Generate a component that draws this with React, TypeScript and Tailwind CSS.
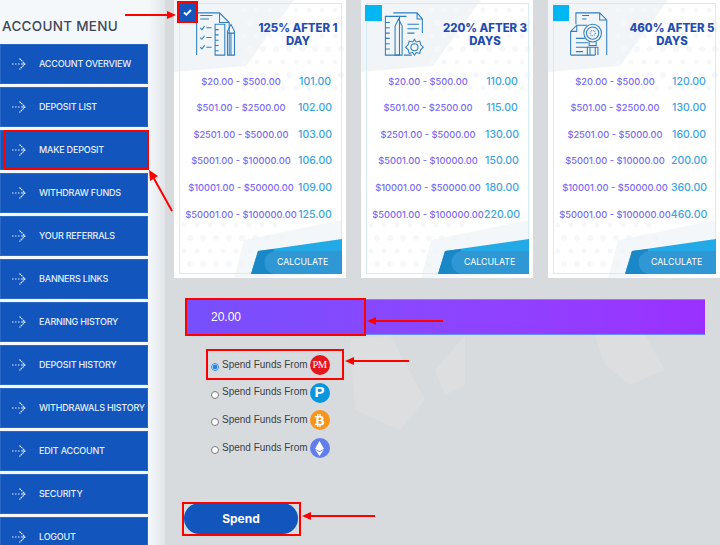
import React from "react";
import { FaBtc, FaEthereum } from "react-icons/fa";

const menu = ["ACCOUNT OVERVIEW","DEPOSIT LIST","MAKE DEPOSIT","WITHDRAW FUNDS","YOUR REFERRALS","BANNERS LINKS","EARNING HISTORY","DEPOSIT HISTORY","WITHDRAWALS HISTORY","EDIT ACCOUNT","SECURITY","LOGOUT"];
const ranges = ["$20.00 - $500.00","$501.00 - $2500.00","$2501.00 - $5000.00","$5001.00 - $10000.00","$10001.00 - $50000.00","$50001.00 - $100000.00"];
const plans = [
  { t1:"125% AFTER 1", t2:"DAY", vals:["101.00","102.00","103.00","106.00","109.00","125.00"], kind:0 },
  { t1:"220% AFTER 3", t2:"DAYS", vals:["110.00","115.00","130.00","150.00","180.00","220.00"], kind:1 },
  { t1:"460% AFTER 5", t2:"DAYS", vals:["120.00","130.00","160.00","200.00","360.00","460.00"], kind:2 },
];

function MenuArrow() {
  return (
    <svg width="14" height="12" viewBox="0 0 14 12" fill="none" stroke="#e3edfb" strokeWidth="1.1">
      <path d="M0 6h1.5M3 6h1.5M6 6h1.5M9 6h4" />
      <path d="M7.5 0.5L13 6l-5.5 5.5" strokeDasharray="1.8 0.6" />
    </svg>
  );
}

function DocIcon({ kind }: { kind: number }) {
  const c = "#2f7fbe";
  return (
    <svg width="44" height="44" viewBox="0 0 46 50" fill="none" stroke={c} strokeWidth="1.2">
      {kind === 0 && (
        <g>
          <path d="M1 49V1h26l11 11v37" />
          <path d="M27 1v11h11" />
          <path d="M5 4h14M5 8h10" />
          <path d="M5 18l2 2 3-4M12 18h6M5 29l2 2 3-4M12 29h6M5 40l2 2 3-4M12 40h6" />
          <path d="M22 49V14h11v35zM22 20h4M22 26h4M22 32h4M22 38h4M22 44h4" />
          <path d="M36 49V22l4-8 4 8v27zM36 24h8M40 24v25" />
        </g>
      )}
      {kind === 1 && (
        <g>
          <path d="M3 49V5h16v44zM3 12h5M3 18h5M3 24h5M3 30h5M3 36h5M3 42h5" />
          <path d="M14 49V16l4-8 4 8v33z" />
          <path d="M12 1h27l6 7v16M39 1v7h6M19 5h8M28 14h13M28 19h13M28 24h8M24 49h9" />
          <circle cx="36" cy="40" r="4" />
          <path d="M36 31l2 3 4-1 1 4 3 3-3 3-1 4-4-1-2 3-2-3-4 1-1-4-3-3 3-3 1-4 4 1z" />
        </g>
      )}
      {kind === 2 && (
        <g>
          <path d="M7 14V1h27l8 8v40M34 1v8h8M14 4h8M14 8h5" />
          <path d="M1 49V22l7-7h12M8 15v7H1M1 49h28M7 30h10M7 35h14M7 40h14M7 45h8" />
          <circle cx="26" cy="24" r="10" />
          <circle cx="26" cy="24" r="7" />
          <circle cx="26" cy="24" r="3" strokeDasharray="1 1" />
          <path d="M22 34v4h8v-4M20 49v-9h12v9M23 40v9M29 40v9" />
        </g>
      )}
    </svg>
  );
}

function Card({ plan }: { plan: typeof plans[number] }) {
  return (
    <div className="relative w-[172px] h-[278px] bg-white shrink-0 overflow-hidden">
      <svg className="absolute inset-0" width="172" height="278" viewBox="0 0 172 278">
        <polygon points="0,0 120,0 72,66 0,72" fill="#f2f5f7" />
        <g fill="#f6f7f9">
          {[...Array(7)].flatMap((_, r) => [...Array(9)].map((_, c) => (
            <circle key={`t${r}-${c}`} cx={70 + c * 13 + (r % 2) * 6} cy={10 + r * 13} r={r % 2 ? 3 : 2.5} />
          )))}
          {[...Array(4)].flatMap((_, r) => [...Array(8)].map((_, c) => (
            <circle key={`b${r}-${c}`} cx={10 + c * 13 + (r % 2) * 6} cy={225 + r * 13} r={r % 2 ? 3 : 2.5} />
          )))}
        </g>
        <polygon points="60,278 70,240 168,220 168,274" fill="#f0f3f6" opacity="0.7" />
        <rect x="5.5" y="3.5" width="162" height="270" fill="none" stroke="#d5ebf8" strokeWidth="1" />
        <polygon points="77,274 84,251 168,239 168,274" fill="#23a9e6" />
        <polygon points="77,274 84,251 100,249 100,274" fill="#1a87c6" />
        <path d="M168 251H102a11.5 11.5 0 0 0 0 23h66z" fill="#2f97d3" />
      </svg>
      <div className="relative flex flex-col h-full">
        <div className="flex items-start h-[68px] pt-[12px]">
          <div className="w-[84px] flex justify-center shrink-0"><DocIcon kind={plan.kind} /></div>
          <div className="ml-[-6px] w-[92px] shrink-0 text-center text-[#1f4eb0] font-extrabold text-[11.4px] leading-[13px] pt-[10px] whitespace-nowrap">
            <div>{plan.t1}</div>
            <div>{plan.t2}</div>
          </div>
        </div>
        <div className="flex flex-col gap-[10.6px] pt-[5.5px]">
          {ranges.map((r, i) => (
            <div key={r} className="flex items-center h-[16px]">
              <div className="w-[134px] text-center text-[9.3px] text-[#7a6cf0] font-medium whitespace-nowrap">{r}</div>
              <div className="w-[14px] shrink-0 text-[10.5px] text-[#39a4dd] font-medium flex justify-center">{plan.vals[i]}</div>
            </div>
          ))}
        </div>
        <div className="absolute left-[103px] top-[255px] text-white text-[8.8px] whitespace-nowrap">CALCULATE</div>
      </div>
    </div>
  );
}

function Coin({ cls, children }: { cls: string; children: React.ReactNode }) {
  return <span className={`w-[20px] h-[20px] rounded-full flex items-center justify-center text-white shrink-0 ${cls}`}>{children}</span>;
}

const funds: { node: React.ReactNode }[] = [
  { node: <Coin cls="bg-[#e5161c]"><span className="text-[10.5px] tracking-[-0.5px]" style={{ fontFamily: '"Liberation Serif", serif' }}>PM</span></Coin> },
  { node: <Coin cls="bg-[#0a96de]"><span className="text-[15px] font-bold">P</span></Coin> },
  { node: <Coin cls="bg-[#f7941a]"><FaBtc size={13} /></Coin> },
  { node: <Coin cls="bg-[#627eea]"><FaEthereum size={15} /></Coin> },
];

export default function App() {
  return (
    <div className="relative w-[720px] h-[545px] overflow-hidden flex bg-[#d8dbde]" style={{ fontFamily: 'Inter, "Liberation Sans", sans-serif' }}>
      <aside className="w-[165px] h-[545px] bg-gradient-to-r from-[#f5f8fb] from-90% to-[#e2e5e8] shrink-0 overflow-hidden">
        <h2 className="h-[44px] pt-[16px] pl-[2px] text-[13.5px] leading-[20px] text-[#3c4858] font-medium tracking-[0.3px]">ACCOUNT MENU</h2>
        <nav className="flex flex-col gap-[3px] w-[148px]">
          {menu.map((m) => (
            <div key={m} className="h-[40px] shrink-0 bg-[#1155bd] border border-[#2a68c6] flex items-center pl-[11px] gap-[13px] text-[#e6effc] text-[9px] font-medium whitespace-nowrap">
              <MenuArrow />
              <span className="tracking-[-0.2px]">{m}</span>
            </div>
          ))}
        </nav>
      </aside>

      <main className="flex-1 pl-[9px] relative">
        <svg className="absolute left-0 top-0" width="555" height="545" viewBox="0 0 555 545">
          <g fill="#dcdee0">
            <polygon points="185,340 225,335 260,400 235,430 190,410" />
            <polygon points="270,370 300,335 300,385 280,395" />
            <polygon points="205,405 250,395 235,430" />
            <polygon points="430,335 480,335 500,370 465,385 440,365" />
          </g>
        </svg>
        <div className="relative flex gap-[15px]">
          {plans.map((p, i) => <Card key={i} plan={p} />)}
        </div>
        <div className="relative ml-[11px] mt-[21px] w-[520px] h-[36px] bg-gradient-to-r from-[#764ffb] via-[#8c45ff] to-[#9a30ff] border-y border-[#6a8ff0] flex items-center pl-[26px] text-white text-[12px]" style={{ fontFamily: '"Liberation Sans", sans-serif' }}>
          20.00
        </div>
        <div className="relative ml-[37px] mt-[20px] flex flex-col gap-[7.7px] text-[#3c3f44] text-[10px]" style={{ fontFamily: '"Liberation Sans", sans-serif' }}>
          {funds.map((f, i) => (
            <label key={i} className="flex items-center h-[20px] gap-[2px]">
              <input type="radio" name="fund" defaultChecked={i === 0} className="w-[8px] h-[8px] m-0 mr-[1px] mt-[4px] accent-[#2680eb]" />
              <span className="mt-[-2px]">Spend Funds From</span>
              {f.node}
            </label>
          ))}
        </div>
        <button className="relative ml-[10px] mt-[45px] w-[114px] h-[31px] rounded-full bg-[#1155bd] text-white text-[12px] font-bold">Spend</button>
      </main>

      {/* red annotation boxes and arrows */}
      <div className="absolute left-[177px] top-[1px] w-[21px] h-[22px] border-2 border-[#ff0000] bg-[#1155bd] flex items-center justify-center">
        <svg width="9" height="7" viewBox="0 0 9 7" fill="none" stroke="white" strokeWidth="1.8"><path d="M1 3.5l2.4 2.2L8 1" /></svg>
      </div>
      <div className="absolute left-[365px] top-[5px] w-[17px] h-[16px] bg-[#00b7f1]" />
      <div className="absolute left-[553px] top-[5px] w-[16px] h-[16px] bg-[#00b7f1]" />
      <div className="absolute left-[4px] top-[130px] w-[145px] h-[40px] border-2 border-[#ff0000]" />
      <div className="absolute left-[185px] top-[298px] w-[181px] h-[38px] border-2 border-[#ff0000]" />
      <div className="absolute left-[206px] top-[349px] w-[138px] h-[31px] border-2 border-[#ff0000]" />
      <div className="absolute left-[182px] top-[502px] w-[119px] h-[34px] border-2 border-[#ff0000]" />
      <svg className="absolute inset-0 pointer-events-none" width="720" height="545" viewBox="0 0 720 545" fill="#ff0000" stroke="none">
        <rect x="125" y="14" width="44" height="2" /><polygon points="176,15 167,11 167,19" />
        <line x1="172" y1="211" x2="152" y2="175" stroke="#ff0000" strokeWidth="2" /><polygon points="149,170 150,181 158,176" />
        <rect x="372" y="320" width="71" height="2" /><polygon points="367,321 376,317 376,325" />
        <rect x="350" y="360" width="59" height="2" /><polygon points="345,361 354,357 354,365" />
        <rect x="308" y="515" width="67" height="2" /><polygon points="302,516 311,512 311,520" />
      </svg>
    </div>
  );
}
